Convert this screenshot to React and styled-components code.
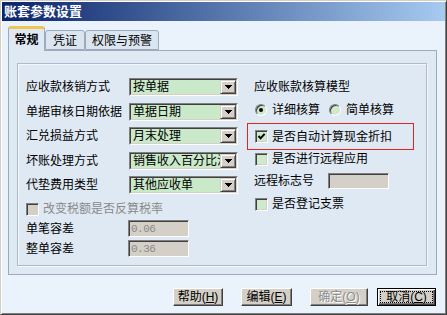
import React from 'react';
import styled, { createGlobalStyle } from 'styled-components';

const Global = createGlobalStyle`
  html, body { margin: 0; padding: 0; background: #eaf3fc; }
  body {
    font-family: "Liberation Sans", "Noto Sans CJK SC", sans-serif;
    font-size: 12px;
    color: #000;
  }
`;

const Window = styled.div`
  width: 447px;
  height: 315px;
  box-sizing: border-box;
  display: flex;
  flex-direction: column;
  background: #eaf3fc;
  border: 1px solid;
  border-color: #d4d0c8 #404040 #404040 #d4d0c8;
  box-shadow: inset 1px 1px 0 #fff, inset -1px -1px 0 #808080;
  padding: 1px;
`;

const TitleBar = styled.div`
  height: 19px;
  flex: none;
  display: flex;
  align-items: center;
  padding-left: 2px;
  background: linear-gradient(to right, #0a246a, #a6caf0);
  color: #fff;
  font-weight: bold;
  font-size: 13px;
  line-height: 19px;
`;

const Body = styled.div`
  flex: 1;
  display: flex;
  flex-direction: column;
  padding: 5px 8px 0 6px;
`;

const TabRow = styled.div`
  display: flex;
  align-items: flex-end;
  height: 24px;
  position: relative;
  z-index: 1;
`;

const Tab = styled.div`
  box-sizing: border-box;
  width: ${p => p.$w}px;
  height: ${p => (p.$active ? 25 : 20)}px;
  margin-bottom: ${p => (p.$active ? -1 : 0)}px;
  display: flex;
  align-items: center;
  justify-content: center;
  background: ${p => (p.$active ? '#dfe9f3' : '#dbe5ef')};
  border: 1px solid #9cabbb;
  border-bottom: ${p => (p.$active ? 'none' : '1px solid #9cabbb')};
  border-top: ${p => (p.$active ? '3px solid #eec452' : '1px solid #9cabbb')};
  border-radius: 3px 3px 0 0;
  font-weight: ${p => (p.$active ? 'bold' : 'normal')};
  line-height: 14px;
  padding-top: ${p => (p.$active ? 0 : 1)}px;
`;

const Panel = styled.div`
  height: 225px;
  box-sizing: border-box;
  border: 1px solid #9cabbb;
  background: #dfe9f3;
  padding: 12px 9px 8px 8px;
  display: flex;
  flex-direction: column;
`;

const Group = styled.div`
  flex: 1;
  border: 1px solid #aebac8;
  box-shadow: 1px 1px 0 #f4f8fc, inset 1px 1px 0 #f4f8fc;
  padding: 14px 0 0 8px;
  display: flex;
`;

const Column = styled.div`
  display: flex;
  flex-direction: column;
  width: ${p => p.$w}px;
  flex: none;
`;

const Row = styled.div`
  display: flex;
  align-items: center;
  height: ${p => p.$h || 18}px;
  margin-top: ${p => p.$mt || 0}px;
  padding-left: ${p => p.$pl || 0}px;
  gap: ${p => p.$gap || 0}px;
  white-space: nowrap;
  line-height: 14px;
`;

const Label = styled.span`
  width: ${p => p.$w || 103}px;
  flex: none;
  white-space: nowrap;
`;

const Text = styled.span`
  color: ${p => (p.$disabled ? '#8a8a8a' : '#000')};
`;

const SelectBox = styled.div`
  width: 109px;
  height: 18px;
  box-sizing: border-box;
  border: 1px solid;
  border-color: #808080 #fff #fff #808080;
  display: flex;
`;

const SelectInner = styled.div`
  flex: 1;
  min-width: 0;
  display: flex;
  border: 1px solid;
  border-color: #404040 #d4d0c8 #d4d0c8 #404040;
  background: #c9e9c9;
`;

const SelectText = styled.span`
  flex: 1;
  min-width: 0;
  overflow: hidden;
  white-space: nowrap;
  padding-left: 2px;
  line-height: 14px;
`;

const ArrowBtn = styled.span`
  width: 16px;
  flex: none;
  box-sizing: border-box;
  background: #d4d0c8;
  border: 1px solid;
  border-color: #d4d0c8 #404040 #404040 #d4d0c8;
  box-shadow: inset 1px 1px 0 #fff, inset -1px -1px 0 #808080;
  display: flex;
  align-items: center;
  justify-content: center;
`;

const Sunken = styled.div`
  width: ${p => p.$w}px;
  height: ${p => p.$h}px;
  box-sizing: border-box;
  border: 1px solid;
  border-color: #808080 #fff #fff #808080;
  box-shadow: inset 1px 1px 0 #404040, inset -1px -1px 0 #d4d0c8;
  background: #d4d0c8;
  display: flex;
  align-items: center;
  padding-left: 2px;
  font-family: "Liberation Mono", monospace;
  font-size: 11px;
  color: #8a8a8a;
  letter-spacing: -0.5px;
`;

const CheckBox = styled.span`
  width: 13px;
  height: 13px;
  flex: none;
  box-sizing: border-box;
  border: 1px solid;
  border-color: #808080 #fff #fff #808080;
  box-shadow: inset 1px 1px 0 #404040, inset -1px -1px 0 #d4d0c8;
  background: ${p => (p.$disabled ? '#d4d0c8' : '#cdeacd')};
  display: flex;
  align-items: center;
  justify-content: center;
`;

const Radio = styled.span`
  width: 12px;
  height: 12px;
  flex: none;
  box-sizing: border-box;
  border-radius: 50%;
  border: 1px solid;
  border-color: #808080 #fff #fff #808080;
  box-shadow: inset 1px 1px 0 #404040;
  background: #cdeacd;
  display: flex;
  align-items: center;
  justify-content: center;
  &::after {
    content: '';
    width: 4px;
    height: 4px;
    border-radius: 50%;
    background: ${p => (p.$on ? '#000' : 'transparent')};
  }
`;

const RadioItem = styled.span`
  display: flex;
  align-items: center;
  gap: 5px;
`;

const Highlight = styled.div`
  height: 27px;
  box-sizing: border-box;
  margin-top: 4px;
  border: 1px solid #e02424;
  padding-left: 7px;
  display: flex;
  align-items: center;
  gap: 4px;
  white-space: nowrap;
  line-height: 14px;
`;

const Footer = styled.div`
  display: flex;
  justify-content: flex-end;
  margin-top: 13px;
  padding-right: 1px;
`;

const Button = styled.div`
  width: ${p => p.$w}px;
  height: 18px;
  box-sizing: border-box;
  margin-left: ${p => p.$ml || 0}px;
  background: #d4d0c8;
  border: 1px solid;
  border-color: ${p => (p.$focus ? '#000' : '#fff #404040 #404040 #fff')};
  box-shadow: ${p =>
    p.$focus
      ? 'inset 1px 1px 0 #fff, inset -1px -1px 0 #404040, inset -2px -2px 0 #808080'
      : 'inset -1px -1px 0 #808080'};
  display: flex;
  align-items: center;
  justify-content: center;
  padding: ${p => (p.$focus ? 2 : 0)}px;
  line-height: 13px;
  color: ${p => (p.$disabled ? '#8c8c8c' : '#000')};
  text-shadow: ${p => (p.$disabled ? '1px 1px 0 #fff' : 'none')};
  white-space: nowrap;
`;

const FocusRing = styled.span`
  flex: 1;
  align-self: stretch;
  display: flex;
  align-items: center;
  justify-content: center;
  outline: 1px dotted #000;
  outline-offset: -1px;
`;

const Arrow = () => (
  <svg width="7" height="4" viewBox="0 0 7 4" shapeRendering="crispEdges">
    <rect x="0" y="0" width="7" height="1" fill="#000" />
    <rect x="1" y="1" width="5" height="1" fill="#000" />
    <rect x="2" y="2" width="3" height="1" fill="#000" />
    <rect x="3" y="3" width="1" height="1" fill="#000" />
  </svg>
);

const Check = () => (
  <svg width="9" height="9" viewBox="0 0 9 9">
    <path d="M1.5 4 L3.6 6.3 L7.6 1.8" fill="none" stroke="#000" strokeWidth="2" />
  </svg>
);

const Select = ({ value }) => (
  <SelectBox>
    <SelectInner>
      <SelectText>{value}</SelectText>
      <ArrowBtn>
        <Arrow />
      </ArrowBtn>
    </SelectInner>
  </SelectBox>
);

const selects = [
  ['应收款核销方式', '按单据'],
  ['单据审核日期依据', '单据日期'],
  ['汇兑损益方式', '月末处理'],
  ['坏账处理方式', '销售收入百分比法'],
  ['代垫费用类型', '其他应收单'],
];

export default function App() {
  return (
    <>
      <Global />
      <Window>
        <TitleBar>账套参数设置</TitleBar>
        <Body>
          <TabRow>
            <Tab $active $w={37}>常规</Tab>
            <Tab $w={40}>凭证</Tab>
            <Tab $w={74}>权限与预警</Tab>
          </TabRow>
          <Panel>
            <Group>
              <Column $w={221}>
                {selects.map(([label, value], i) => (
                  <Row key={label} $mt={i === 0 ? 0 : 6.5}>
                    <Label>{label}</Label>
                    <Select value={value} />
                  </Row>
                ))}
                <Row $mt={6} $gap={4}>
                  <CheckBox $disabled />
                  <Text $disabled>改变税额是否反算税率</Text>
                </Row>
                <Row $h={17} $mt={2}>
                  <Label $w={102}>单笔容差</Label>
                  <Sunken $w={61} $h={17}>0.06</Sunken>
                </Row>
                <Row $h={17} $mt={3}>
                  <Label $w={102}>整单容差</Label>
                  <Sunken $w={61} $h={17}>0.36</Sunken>
                </Row>
              </Column>
              <Column $w={167}>
                <Row $pl={7}>应收账款核算模型</Row>
                <Row $pl={8} $mt={5} $gap={9}>
                  <RadioItem>
                    <Radio $on />
                    详细核算
                  </RadioItem>
                  <RadioItem>
                    <Radio />
                    简单核算
                  </RadioItem>
                </Row>
                <Highlight>
                  <CheckBox>
                    <Check />
                  </CheckBox>
                  是否自动计算现金折扣
                </Highlight>
                <Row $pl={8} $gap={4}>
                  <CheckBox />
                  是否进行远程应用
                </Row>
                <Row $pl={7} $mt={4}>
                  <Label $w={74}>远程标志号</Label>
                  <Sunken $w={61} $h={16} />
                </Row>
                <Row $pl={8} $mt={5} $gap={4}>
                  <CheckBox />
                  是否登记支票
                </Row>
              </Column>
            </Group>
          </Panel>
          <Footer>
            <Button $w={50}>
              帮助(<u>H</u>)
            </Button>
            <Button $w={51} $ml={18}>
              编辑(<u>E</u>)
            </Button>
            <Button $w={58} $ml={18} $disabled>
              确定(<u>O</u>)
            </Button>
            <Button $w={59} $ml={9} $focus>
              <FocusRing>
                取消(<u>C</u>)
              </FocusRing>
            </Button>
          </Footer>
        </Body>
      </Window>
    </>
  );
}
